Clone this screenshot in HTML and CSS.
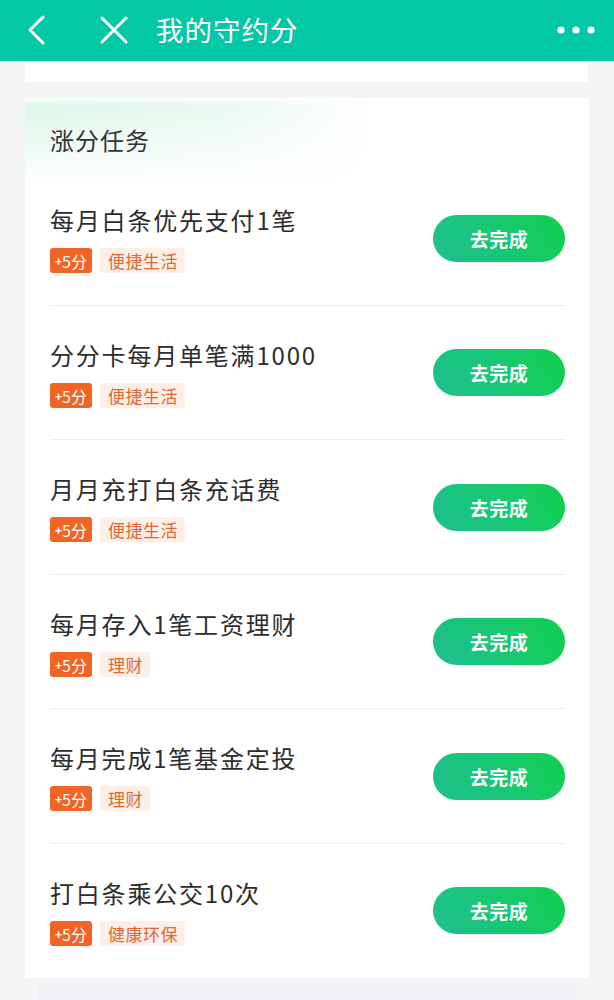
FILE: index.html
```html
<!DOCTYPE html>
<html lang="zh-CN">
<head>
<meta charset="utf-8">
<title>我的守约分</title>
<link rel="stylesheet" href="styles.css">
</head>
<body>
<header class="topbar">
  <svg class="ico-back" width="22" height="32" viewBox="0 0 22 32"><polyline points="17,3 4,16 17,29" fill="none" stroke="#fff" stroke-width="3" stroke-linecap="round" stroke-linejoin="round"/></svg>
  <svg class="ico-close" width="30" height="30" viewBox="0 0 30 30"><path d="M3 3 L27 27 M27 3 L3 27" fill="none" stroke="#fff" stroke-width="3" stroke-linecap="round"/></svg>
  <h1 class="title">我的守约分</h1>
  <svg class="ico-more" width="38" height="10" viewBox="0 0 38 10"><circle cx="4" cy="5" r="3.6" fill="#fff"/><circle cx="19" cy="5" r="3.6" fill="#fff"/><circle cx="34" cy="5" r="3.6" fill="#fff"/></svg>
</header>
<div class="strip"></div>
<section class="card">
  <h2 class="card-title">涨分任务</h2>
  <div class="row">
    <div class="info"><div class="name">每月白条优先支付1笔</div><div class="tags"><span class="pts"><small>+</small>5分</span><span class="cat">便捷生活</span></div></div>
    <button class="go">去完成</button>
  </div>
  <div class="row">
    <div class="info"><div class="name">分分卡每月单笔满1000</div><div class="tags"><span class="pts"><small>+</small>5分</span><span class="cat">便捷生活</span></div></div>
    <button class="go">去完成</button>
  </div>
  <div class="row">
    <div class="info"><div class="name">月月充打白条充话费</div><div class="tags"><span class="pts"><small>+</small>5分</span><span class="cat">便捷生活</span></div></div>
    <button class="go">去完成</button>
  </div>
  <div class="row">
    <div class="info"><div class="name">每月存入1笔工资理财</div><div class="tags"><span class="pts"><small>+</small>5分</span><span class="cat">理财</span></div></div>
    <button class="go">去完成</button>
  </div>
  <div class="row">
    <div class="info"><div class="name">每月完成1笔基金定投</div><div class="tags"><span class="pts"><small>+</small>5分</span><span class="cat">理财</span></div></div>
    <button class="go">去完成</button>
  </div>
  <div class="row last">
    <div class="info"><div class="name">打白条乘公交10次</div><div class="tags"><span class="pts"><small>+</small>5分</span><span class="cat">健康环保</span></div></div>
    <button class="go">去完成</button>
  </div>
</section>
<div class="next"></div>
</body>
</html>
```
FILE: styles.css
```css
* { box-sizing: border-box; }
html, body { margin: 0; padding: 0; }
body {
  background: #f4f5f7;
  font-family: "Noto Sans CJK SC", "Noto Sans", sans-serif;
  width: 614px;
  height: 1000px;
  overflow: hidden;
}
.topbar {
  height: 61px;
  background: #03c8a6;
  display: flex;
  align-items: center;
}
.ico-back { margin-left: 26px; margin-top: -2px; }
.ico-close { margin-left: 51px; margin-top: -2px; }
.title {
  margin: -4px 0 0 27px;
  font-size: 27.5px;
  font-weight: 400;
  color: #fff;
  letter-spacing: 1px;
  line-height: 40px;
}
.ico-more { margin-left: auto; margin-right: 19px; margin-top: -2px; }
.strip {
  height: 21px;
  margin: 0 26px 0 25px;
  background: #fff;
}
.card {
  margin: 16px 25px 0 25px;
  height: 880px;
  background:
    linear-gradient(90deg, rgba(255,255,255,0) 0%, rgba(255,255,255,0.35) 35%, #fff 62%),
    linear-gradient(180deg, #fff 0, #dcf7e9 6px, #ebfaf2 40px, #fff 88px);
  padding-top: 27px;
}
.card-title {
  margin: 0 0 16px 25px;
  font-size: 24px;
  line-height: 30px;
  font-weight: 400;
  color: #333;
  letter-spacing: 1px;
}
.row {
  height: 134.5px;
  margin: 0 24px 0 25px;
  border-bottom: 1px solid #ececec;
  display: flex;
  align-items: flex-start;
  justify-content: space-between;
  padding-top: 33px;
}
.row.last { border-bottom: none; }
.name {
  font-size: 24px;
  line-height: 32px;
  color: #2d2d2d;
  letter-spacing: 1.8px;
}
.tags {
  margin-top: 12px;
  display: flex;
  gap: 8px;
}
.pts {
  height: 25px;
  width: 42px;
  background: #f26424;
  color: #fff;
  border-radius: 3px;
  font-size: 16px;
  line-height: 25px;
  text-align: center;
}
.pts small { font-size: 12px; vertical-align: 2px; font-weight: 700; }
.cat {
  height: 25px;
  padding: 0 7px 0 8px;
  background: #fdefe8;
  color: #e0672f;
  border-radius: 3px;
  font-size: 17px;
  line-height: 25px;
  letter-spacing: 0.5px;
}
.go {
  margin-top: 10.5px;
  width: 132px;
  height: 47px;
  border: none;
  border-radius: 24px;
  background: linear-gradient(60deg, #1fbf8f 0%, #17c874 50%, #10d04a 100%);
  color: #fff;
  font-family: "Noto Sans CJK SC", sans-serif;
  font-size: 19px;
  font-weight: 700;
  letter-spacing: 0.5px;
  padding: 0;
}
.next {
  margin: 5px 38px 0 38px;
  height: 30px;
  background: #f0f1f4;
}
```
